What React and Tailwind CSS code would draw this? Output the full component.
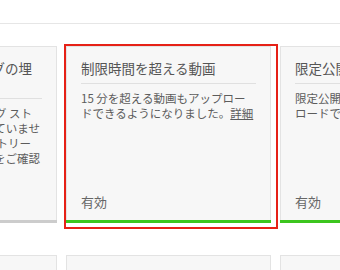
import React from "react";

function Card({ children, bar, highlight }) {
  return (
    <div className="relative w-[205px] h-[177px] shrink-0">
      <div className="w-full h-full flex flex-col bg-[#f7f7f7] border-x border-t border-[#e3e3e3]">
        {children}
        <div className={"h-[3px] -mx-px " + bar}></div>
      </div>
      {highlight && (
        <div className="absolute left-[-2px] top-[-2px] w-[214px] h-[185px] border-2 border-[#e62117] pointer-events-none"></div>
      )}
    </div>
  );
}

export default function App() {
  return (
    <div className="w-[340px] h-[270px] overflow-hidden bg-white font-['Noto_Sans_CJK_JP','Noto_Sans',sans-serif] text-[#5c5c5c]">
      <div className="h-[24px] border-b border-[#e6e6e6]"></div>
      <div className="mt-[22px] ml-[-148px] flex gap-[9px]">
        <Card bar="bg-[#cccccc]">
          <div className="px-[14px] pt-[13px] flex flex-col flex-1">
            <div className="text-[13.5px] leading-[16px] text-[#555] pb-[6px] border-b border-[#e0e0e0]">
              <div className="whitespace-nowrap text-right pr-[10px]">ストリーミングの埋</div>
              <div className="whitespace-nowrap">め込み</div>
            </div>
            <div className="mt-[7px] text-[11.5px] leading-[15px]">
              <div className="whitespace-nowrap text-right pr-[10px]">現在のブログ スト</div>
              <div className="whitespace-nowrap text-right pr-[2px]">リームは利用できていませ</div>
              <div className="whitespace-nowrap text-right pr-[11px]">ん。詳しくは、ヒストリー</div>
              <div className="whitespace-nowrap text-right pr-[2px]">をご確認</div>
            </div>
            <div className="mt-auto pb-[10px] text-[13px] leading-[16px] text-[#666]">無効</div>
          </div>
        </Card>
        <Card bar="bg-[#3cc51e]" highlight>
          <div className="px-[14px] pt-[13px] flex flex-col flex-1">
            <div className="text-[13.5px] leading-[16px] text-[#555] pb-[7px] border-b border-[#e0e0e0] whitespace-nowrap">
              制限時間を超える動画
            </div>
            <div className="mt-[7px] text-[11.5px] leading-[15px]">
              <div className="whitespace-nowrap">15 分を超える動画もアップロー</div>
              <div className="whitespace-nowrap">
                ドできるようになりました。<span className="underline">詳細</span>
              </div>
            </div>
            <div className="mt-auto pb-[10px] text-[13px] leading-[16px] text-[#666]">有効</div>
          </div>
        </Card>
        <Card bar="bg-[#3cc51e]">
          <div className="px-[14px] pt-[13px] flex flex-col flex-1">
            <div className="text-[13.5px] leading-[16px] text-[#555] pb-[7px] border-b border-[#e0e0e0] whitespace-nowrap">
              限定公開動画
            </div>
            <div className="mt-[7px] text-[11.5px] leading-[15px]">
              <div className="whitespace-nowrap">限定公開動画をアップ</div>
              <div className="whitespace-nowrap">ロードできます。</div>
            </div>
            <div className="mt-auto pb-[10px] text-[13px] leading-[16px] text-[#666]">有効</div>
          </div>
        </Card>
      </div>
      <div className="mt-[32px] ml-[-148px] flex gap-[9px]">
        <div className="w-[205px] h-[60px] shrink-0 bg-[#f7f7f7] border border-[#e3e3e3]"></div>
        <div className="w-[205px] h-[60px] shrink-0 bg-[#f7f7f7] border border-[#e3e3e3]"></div>
        <div className="w-[205px] h-[60px] shrink-0 bg-[#f7f7f7] border border-[#e3e3e3]"></div>
      </div>
    </div>
  );
}
